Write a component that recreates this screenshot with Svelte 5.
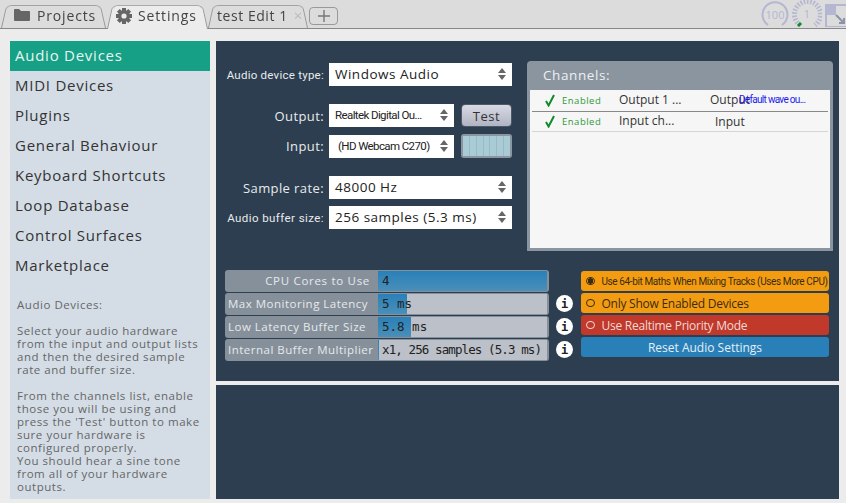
<script>
  const pages = [
    "Audio Devices",
    "MIDI Devices",
    "Plugins",
    "General Behaviour",
    "Keyboard Shortcuts",
    "Loop Database",
    "Control Surfaces",
    "Marketplace"
  ];

  const sliders = [
    { label: "CPU Cores to Use", value: "4", fill: 100, info: false },
    { label: "Max Monitoring Latency", value: "5 ms", fill: 17, info: true },
    { label: "Low Latency Buffer Size", value: "5.8 ms", fill: 19.5, info: true },
    { label: "Internal Buffer Multiplier", value: "x1, 256 samples (5.3 ms)", fill: 0.5, info: true, tight: true }
  ];

  const channels = [
    { name: "Output 1 ...", kind: "Output", pad: "out", device: "Default wave ou..." },
    { name: "Input ch...", kind: "Input", pad: "in", device: "" }
  ];
</script>

<div class="top">
  <div class="tab first">
    <svg width="16" height="12" viewBox="0 0 16 12"><path d="M0 1q0-1 1-1h4l2 2h8q1 0 1 1v8q0 1-1 1H1q-1 0-1-1z" fill="#666" /></svg>
    <span>Projects</span>
  </div>
  <div class="tab active">
    <svg width="16" height="16" viewBox="0 0 16 16">
      <g fill="#666">
        <circle cx="8" cy="8" r="6" />
        <rect x="6" y="0" width="4" height="16" />
        <rect x="6" y="0" width="4" height="16" transform="rotate(45 8 8)" />
        <rect x="6" y="0" width="4" height="16" transform="rotate(90 8 8)" />
        <rect x="6" y="0" width="4" height="16" transform="rotate(135 8 8)" />
      </g>
      <circle cx="8" cy="8" r="2.6" fill="#ececec" />
    </svg>
    <span>Settings</span>
  </div>
  <div class="tab edit"><span>test Edit 1</span> <span class="close">×</span></div>
  <div class="plus">
    <svg width="14" height="14" viewBox="0 0 14 14"><path d="M7 1v12M1 7h12" stroke="#777" stroke-width="1.4" /></svg>
  </div>
  <div class="meters">
    <svg width="28" height="28" viewBox="0 0 28 28">
      <path d="M7 24a12.5 12.5 0 1 1 14 0" fill="none" stroke="#b4b6d2" stroke-width="2" />
      <text x="14" y="18" text-anchor="middle" font-size="11" fill="#b4b6d2">100</text>
    </svg>
    <svg width="30" height="30" viewBox="0 0 30 30">
      <path d="M8 25a13 13 0 1 1 15 0" fill="none" stroke="#b4b6d2" stroke-width="5" stroke-dasharray="1.6 1.6" />
      <text x="15" y="18" text-anchor="middle" font-size="11" fill="#b4b6d2">1</text>
      <path d="M6 26l3-3" stroke="#118a2c" stroke-width="3" />
    </svg>
    <svg width="21" height="24" viewBox="0 0 21 24">
      <rect x="1" y="2" width="22" height="22" fill="none" stroke="#b4b6d2" stroke-width="2" />
      <rect x="1" y="2" width="10" height="10" fill="#b4b6d2" />
      <path d="M11 12l8 8M19 15v5h-5" fill="none" stroke="#8d92a8" stroke-width="2" />
    </svg>
  </div>
</div>

<div class="main">
  <div class="sidebar">
    <ul>
      {#each pages as page, i}
        <li class:selected={i === 0}>{page}</li>
      {/each}
    </ul>
    <div class="help">
      <p>Audio Devices:</p>
      <p>Select your audio hardware from the input and output lists and then the desired sample rate and buffer size.</p>
      <p>From the channels list, enable those you will be using and press the 'Test' button to make sure your hardware is configured properly.<br />You should hear a sine tone from all of your hardware outputs.</p>
    </div>
  </div>

  <div class="content">
    <div class="panel">
      <div class="upper">
        <div class="form">
          <div class="row">
            <span class="label small">Audio device type:</span>
            <div class="select wide">Windows Audio<i></i></div>
          </div>
          <div class="row gap">
            <span class="label">Output:</span>
            <div class="select narrow">Realtek Digital Ou...<i></i></div>
            <button class="test">Test</button>
          </div>
          <div class="row">
            <span class="label">Input:</span>
            <div class="select narrow centered">(HD Webcam C270)<i></i></div>
            <div class="level">
              {#each Array(7) as _}<b></b>{/each}
            </div>
          </div>
          <div class="row gap">
            <span class="label">Sample rate:</span>
            <div class="select wide">48000 Hz<i></i></div>
          </div>
          <div class="row">
            <span class="label small buffer">Audio buffer size:</span>
            <div class="select wide">256 samples (5.3 ms)<i></i></div>
          </div>
        </div>

        <div class="channels">
          <div class="channels-head">Channels:</div>
          <div class="channels-list">
            {#each channels as ch}
              <div class="channel">
                <svg class="tick" width="10" height="13" viewBox="0 0 10 13"><path d="M1 7l2.6 4.5L9 1" fill="none" stroke="#118a2c" stroke-width="2" /></svg>
                <span class="enabled">Enabled</span>
                <span class="ch-name">{ch.name}</span>
                <span class="ch-kind {ch.pad}">{ch.kind}</span>
                {#if ch.device}<span class="ch-device">{ch.device}</span>{/if}
              </div>
            {/each}
          </div>
        </div>
      </div>

      <div class="lower">
        <div class="sliders">
          {#each sliders as s}
            <div class="slider-row">
              <div class="slider" class:righty={!s.info}>
                <span class="slider-label">{s.label}</span>
                <div class="track">
                  <div class="fill" style="width: {s.fill}%"></div>
                  <span class="value" class:tight={s.tight}>{s.value}</span>
                </div>
              </div>
              {#if s.info}<span class="info">i</span>{/if}
            </div>
          {/each}
        </div>
        <div class="buttons">
          <div class="opt orange tiny"><span class="radio on"></span>Use 64-bit Maths When Mixing Tracks (Uses More CPU)</div>
          <div class="opt orange"><span class="radio"></span>Only Show Enabled Devices</div>
          <div class="opt red"><span class="radio"></span>Use Realtime Priority Mode</div>
          <div class="opt blue">Reset Audio Settings</div>
        </div>
      </div>
    </div>
    <div class="panel bottom"></div>
  </div>
</div>

<style>
  :global(body) {
    background: #ececec;
    font-family: "Open Sans", sans-serif;
    overflow: hidden;
  }

  .top {
    display: flex;
    align-items: flex-end;
    height: 29px;
    padding-left: 1px;
    background: #dcdcdc;
    border-bottom: 1px solid #888;
    box-sizing: border-box;
    color: #444;
    font-size: 14px;
    letter-spacing: 0.85px;
  }

  .tab {
    position: relative;
    display: flex;
    align-items: center;
    height: 26px;
    box-sizing: border-box;
    white-space: nowrap;
  }

  /* the slanted tab outline */
  .tab::before {
    content: "";
    position: absolute;
    inset: 0;
    border: 1px solid #999;
    border-bottom: none;
    border-radius: 6px 6px 0 0;
    background: #dcdcdc;
    transform: perspective(40px) rotateX(10deg);
    transform-origin: bottom;
  }

  .tab > * {
    position: relative;
  }

  .first {
    width: 105px;
    padding-left: 13px;
    gap: 7px;
    margin-right: 1px;
  }

  .active {
    width: 101px;
    height: 27px;
    margin-bottom: -1px;
    padding-left: 9px;
    gap: 6px;
  }

  .active::before {
    background: #ececec;
  }

  .edit {
    width: 100px;
    padding-left: 9px;
    gap: 6px;
    letter-spacing: 0.55px;
  }

  .close {
    color: #bbb;
    font-size: 15px;
    line-height: 1;
  }

  .plus {
    display: flex;
    align-items: center;
    justify-content: center;
    width: 29px;
    height: 18px;
    margin: 0 0 3px 1px;
    box-sizing: border-box;
    border: 1px solid #999;
    border-radius: 4px;
  }

  .meters {
    display: flex;
    align-items: center;
    gap: 3px;
    height: 27px;
    margin-left: auto;
    letter-spacing: 0;
  }

  .main {
    display: flex;
    gap: 6px;
    height: 474px;
    padding: 12px 7px 4px 10px;
    box-sizing: border-box;
  }

  .sidebar {
    display: flex;
    flex-direction: column;
    width: 200px;
    background: #d4dde6;
    color: #333;
  }

  ul {
    margin: 0;
    padding: 0;
    list-style: none;
  }

  li {
    height: 30px;
    padding-left: 5px;
    font-size: 15px;
    line-height: 29px;
    letter-spacing: 0.75px;
  }

  .selected {
    background: #16a085;
    color: #e8f5f1;
  }

  .help {
    margin-top: 17px;
    padding: 0 7px;
    color: #666;
    font-size: 11.5px;
    line-height: 13px;
    letter-spacing: 0.54px;
  }

  .help p {
    margin: 0 0 13px;
  }

  .content {
    display: flex;
    flex: 1;
    flex-direction: column;
    gap: 4px;
  }

  .panel {
    height: 340px;
    background: #2c3e50;
    box-sizing: border-box;
    padding: 20px 6px 0 9px;
  }

  .bottom {
    height: 114px;
    padding: 0;
  }

  .upper {
    display: flex;
    gap: 15px;
    align-items: flex-start;
    height: 209px;
  }

  .form {
    width: 287px;
    padding-top: 2px;
  }

  .row {
    display: flex;
    align-items: center;
    margin-bottom: 7px;
  }

  .row.gap {
    margin-top: 18px;
  }

  .label {
    width: 99px;
    margin-right: 5px;
    color: #e8eaec;
    font-size: 13px;
    text-align: right;
    letter-spacing: 0.4px;
    white-space: nowrap;
  }

  .small {
    font-family: "Roboto", sans-serif;
    font-size: 11.5px;
    letter-spacing: 0.25px;
  }

  .buffer {
    letter-spacing: 0.42px;
  }

  .select {
    position: relative;
    height: 23px;
    background: #fff;
    box-sizing: border-box;
    padding-left: 6px;
    color: #222;
    font-size: 13.5px;
    line-height: 23px;
    letter-spacing: 0.5px;
    white-space: nowrap;
  }

  .select i::before,
  .select i::after {
    content: "";
    position: absolute;
    right: 6px;
    border-left: 4px solid transparent;
    border-right: 4px solid transparent;
  }

  .select i::before {
    top: 5px;
    border-bottom: 5px solid #666;
  }

  .select i::after {
    top: 12px;
    border-top: 5px solid #666;
  }

  .wide {
    width: 183px;
  }

  .narrow {
    width: 125px;
    padding-left: 6px;
    font-family: "Roboto", sans-serif;
    font-size: 11.5px;
    letter-spacing: -0.6px;
  }

  .centered {
    padding-left: 9px;
  }

  .test {
    width: 51px;
    height: 23px;
    margin-left: 7px;
    padding: 0;
    border: 1px solid #4d5968;
    border-radius: 4px;
    background: linear-gradient(#d8dae4, #b0b3c2);
    color: #333;
    font: 13px "Open Sans", sans-serif;
    letter-spacing: 0.5px;
  }

  .level {
    display: flex;
    gap: 1px;
    width: 51px;
    height: 24px;
    box-sizing: border-box;
    border: 2px solid #8b96a0;
    border-radius: 3px;
    background: #9bb8c5;
  }

  .row .level {
    margin-left: 7px;
  }

  .level b {
    flex: 1;
    background: #a9cbd6;
  }

  .channels {
    width: 306px;
    height: 190px;
    border-radius: 4px 4px 0 0;
    background: #8a95a0;
    box-sizing: border-box;
    padding: 0 3px 3px;
    display: flex;
    flex-direction: column;
  }

  .channels-head {
    height: 29px;
    padding-left: 13px;
    color: #eef0f2;
    font-size: 13.5px;
    line-height: 28px;
    letter-spacing: 0.6px;
  }

  .channels-list {
    flex: 1;
    background: #f6f6f6;
    padding: 0 2px;
  }

  .channel {
    position: relative;
    display: flex;
    align-items: center;
    height: 20px;
    border-bottom: 1px solid #d5d5d5;
    box-sizing: border-box;
    font-size: 12px;
    color: #333;
  }

  .channel:first-child {
    height: 22px;
    border-bottom-color: #888;
  }

  .tick {
    margin-left: 13px;
  }

  .enabled {
    width: 57px;
    margin-left: 7px;
    color: #2e9a3a;
    font-size: 9.5px;
    letter-spacing: 0.5px;
  }

  .ch-name {
    margin-top: -2px;
  }

  .ch-kind {
    position: absolute;
    top: 1px;
  }

  .out {
    left: 178px;
  }

  .in {
    left: 183px;
  }

  .ch-device {
    position: absolute;
    left: 207px;
    top: 4px;
    color: #1a1aee;
    font-family: "Roboto", sans-serif;
    font-size: 10px;
    letter-spacing: -0.7px;
    white-space: nowrap;
  }

  .lower {
    display: flex;
    margin-top: -1px;
  }

  .sliders {
    width: 356px;
  }

  .slider-row {
    display: flex;
    align-items: center;
    height: 23px;
  }

  .slider {
    display: flex;
    width: 324px;
    height: 22px;
    box-sizing: border-box;
    padding: 1px 2px 1px 0;
    border-radius: 3px;
    background: #85909b;
  }

  .slider-label {
    width: 153px;
    flex: none;
    padding-left: 3px;
    box-sizing: border-box;
    color: #e6e9ec;
    font-size: 11.5px;
    line-height: 20px;
    letter-spacing: 0.5px;
    white-space: nowrap;
  }

  .righty .slider-label {
    padding-right: 8px;
    text-align: right;
    letter-spacing: 0.7px;
  }

  .track {
    position: relative;
    flex: 1;
    background: #bcc0c8;
  }

  .fill {
    position: absolute;
    inset: 0 auto 0 0;
    background: linear-gradient(#2980b9, #4a8fb8);
  }

  .value {
    position: absolute;
    left: 4px;
    top: 0;
    color: #222;
    font-family: "DejaVu Sans Mono", monospace;
    font-size: 12.5px;
    line-height: 20px;
    white-space: nowrap;
  }

  .tight {
    letter-spacing: -0.9px;
  }

  .info {
    display: flex;
    align-items: center;
    justify-content: center;
    width: 17px;
    height: 17px;
    margin-left: 7px;
    border-radius: 50%;
    background: #fff;
    color: #222;
    font-family: "DejaVu Sans Mono", monospace;
    font-size: 12px;
    font-weight: bold;
  }

  .buttons {
    width: 248px;
    padding-top: 1px;
  }

  .opt {
    display: flex;
    align-items: center;
    gap: 7px;
    height: 20px;
    margin: 1px 0 2px;
    padding-left: 5px;
    box-sizing: border-box;
    border-radius: 3px;
    font-size: 12px;
    letter-spacing: -0.25px;
    white-space: nowrap;
  }

  .orange {
    background: #f39c12;
    color: #3a2c10;
  }

  .tiny {
    font-family: "Roboto", sans-serif;
    font-size: 10px;
    letter-spacing: -0.39px;
  }

  .red {
    background: #c0392b;
    color: #f3d9d6;
  }

  .blue {
    justify-content: center;
    padding-left: 0;
    background: #2980b9;
    color: #e4eef5;
    letter-spacing: 0;
  }

  .radio {
    flex: none;
    border: 1.5px solid currentColor;
    border-radius: 50%;
    width: 6.5px;
    height: 6.5px;
  }

  .radio.on {
    background: radial-gradient(circle, #3a2c10 0 2.5px, transparent 3px);
  }
</style>
